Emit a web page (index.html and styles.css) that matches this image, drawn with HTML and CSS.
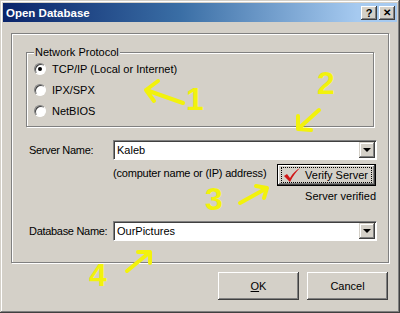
FILE: index.html
```html
<!doctype html>
<html>
<head>
<meta charset="utf-8">
<title>Open Database</title>
<link rel="stylesheet" href="styles.css">
</head>
<body>
<div class="window">
  <div class="titlebar">
    <span class="title">Open Database</span>
    <span class="tbtn help">?</span>
    <span class="tbtn close">&#x2715;</span>
  </div>

  <div class="client">
    <div class="outer">
      <div class="proto">
        <span class="legend">Network Protocol</span>
        <label class="radio"><span class="dot on"></span>TCP/IP (Local or Internet)</label>
        <label class="radio"><span class="dot"></span>IPX/SPX</label>
        <label class="radio"><span class="dot"></span>NetBIOS</label>
      </div>

      <div class="row server">
        <span class="lbl">Server Name:</span>
        <div class="combo"><span class="val">Kaleb</span><span class="drop"></span></div>
      </div>
      <div class="row hint">
        <span class="note">(computer name or (IP) address)</span>
        <div class="btn verify"><span class="focus"><svg class="check" width="18" height="16" viewBox="0 0 18 16"><path d="M1 9 L4 7 L7 11 C10 6 13 3 17 1 C13 5 10 9 7 15 Z" fill="#d01818"/></svg>Verify Server</span></div>
      </div>
      <div class="status">Server verified</div>

      <div class="row db">
        <span class="lbl">Database Name:</span>
        <div class="combo"><span class="val">OurPictures</span><span class="drop"></span></div>
      </div>
    </div>

    <div class="actions">
      <div class="btn"><span><u>O</u>K</span></div>
      <div class="btn"><span>Cancel</span></div>
    </div>
  </div>

  <svg class="notes" width="400" height="313" viewBox="0 0 400 313">
    <g fill="none" stroke="#f2f20c" stroke-width="4" stroke-linecap="round" stroke-linejoin="round">
      <path d="M183 103 L146 90 M158 81 L146 90 L154 101"/>
      <path d="M319 110 L298 129 M298 116 L298 129 L311 130"/>
      <path d="M240 203 L267 188 M256 186 L267 188 L264 198"/>
      <path d="M127 271 L150 252 M138 252 L150 252 L150 263"/>
    </g>
    <g class="num" fill="#f2f20c">
      <text x="186" y="110">1</text>
      <text x="317" y="94">2</text>
      <text x="205" y="210">3</text>
      <text x="89" y="286">4</text>
    </g>
  </svg>
</div>
</body>
</html>
```

FILE: styles.css
```css
body { margin:0; font-family:"Liberation Sans", Arial, sans-serif; font-size:11px; color:#000; }

.window { position:relative; width:400px; height:313px; box-sizing:border-box; padding:3px; background:#d4d0c8;
  box-shadow: inset -1px -1px #404040, inset 1px 1px #d4d0c8, inset -2px -2px #808080, inset 2px 2px #fff; }

.titlebar { height:19px; display:flex; align-items:center; padding:0 2px 0 2px; color:#fff;
  background:linear-gradient(to right, #0a246a 0%, #3a6ea5 45%, #a6caf0 90%); }
.title { flex:1; font-weight:bold; font-size:11.5px; padding-left:1px; }
.tbtn { width:16px; height:14px; margin-left:2px; background:#d4d0c8; color:#000; font-weight:bold; font-size:11px;
  display:flex; align-items:center; justify-content:center; box-sizing:border-box;
  box-shadow: inset -1px -1px #404040, inset 1px 1px #fff, inset -2px -2px #808080; }
.tbtn.close { font-size:10px; }

.client { padding:11px 8px 0 8px; }

.outer { height:228px; border:1px solid #808080; box-shadow:1px 1px 0 #fff, inset 1px 1px 0 #fff; padding:0 11px 0 17px; }

.proto { position:relative; box-sizing:border-box; margin:18px 3px 0 -3px; height:75px; padding:5px 0 0 7px; border:1px solid #808080;
  box-shadow:1px 1px 0 #fff, inset 1px 1px 0 #fff; }
.proto .legend { position:absolute; left:7px; top:-7px; padding:0 1px; background:#d4d0c8; line-height:13px; }
.radio { display:flex; align-items:center; height:21px; }
.dot { width:12px; height:12px; margin-right:6px; border-radius:50%; box-sizing:border-box; background:#fff; position:relative;
  border:1px solid; border-color:#808080 #fff #fff #808080; box-shadow:inset 1px 1px #404040; }
.dot.on::after { content:""; position:absolute; left:3px; top:3px; width:4px; height:4px; border-radius:50%; background:#000; }

.row { display:flex; align-items:center; }
.lbl { width:84px; flex:none; letter-spacing:-0.3px; }
.server { margin-top:13px; }
.combo { flex:1; height:20px; box-sizing:border-box; background:#fff; display:flex; align-items:center;
  border:1px solid; border-color:#808080 #fff #fff #808080; box-shadow:inset 1px 1px #404040; padding-left:3px; }
.combo .val { flex:1; }
.drop { width:16px; height:16px; margin-right:1px; background:#d4d0c8; position:relative;
  box-shadow: inset -1px -1px #404040, inset 1px 1px #d4d0c8, inset -2px -2px #808080, inset 2px 2px #fff; }
.drop::after { content:""; position:absolute; left:4px; top:6px; border-left:4px solid transparent; border-right:4px solid transparent; border-top:4px solid #000; }

.hint { margin-top:4px; padding-left:84px; justify-content:space-between; padding-right:1px; }
.note { align-self:flex-start; padding-top:3px; letter-spacing:-0.2px; }

.btn { height:28px; box-sizing:border-box; display:flex; align-items:center; justify-content:center; background:#d4d0c8;
  box-shadow: inset -1px -1px #404040, inset 1px 1px #fff, inset -2px -2px #808080, inset 2px 2px #d4d0c8; }
.verify { width:99px; height:22px; border:1px solid #000; padding:3px; }
.verify .focus { flex:1; height:14px; border:1px dotted #000; display:flex; align-items:center; padding-right:3px; white-space:nowrap; }
.check { margin-right:auto; margin-left:1px; }

.status { text-align:right; padding-right:1px; margin-top:4px; }

.db { margin-top:19px; }

.actions { display:flex; justify-content:flex-end; gap:8px; margin-top:9px; padding-right:1px; }
.actions .btn { width:81px; }

.notes { position:absolute; left:0; top:0; pointer-events:none; }
.num text { font-family:"Liberation Sans", sans-serif; font-weight:bold; font-size:32px; }
```
